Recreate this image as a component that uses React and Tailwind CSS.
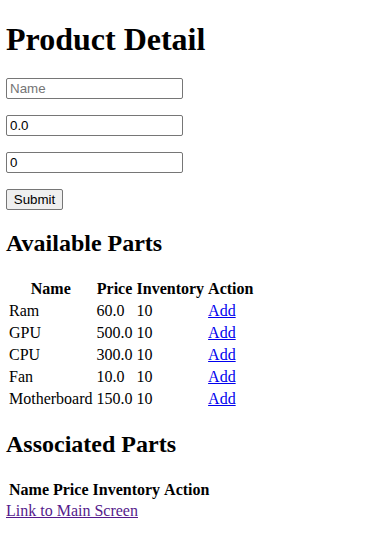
const availableParts = [
  { name: 'Ram', price: '60.0', inventory: 10 },
  { name: 'GPU', price: '500.0', inventory: 10 },
  { name: 'CPU', price: '300.0', inventory: 10 },
  { name: 'Fan', price: '10.0', inventory: 10 },
  { name: 'Motherboard', price: '150.0', inventory: 10 },
];

const cell = 'p-[1px] leading-[18px]';
const th = `${cell} font-bold text-center`;
const td = `${cell} text-left`;

const App = () => {
  return (
    <div className="min-h-[554px] bg-white px-[6px] pt-[1px] font-['Liberation_Serif','Times_New_Roman',serif] text-[16px] text-black">
      {/* Header */}
      <h1 className="mt-[20px] mb-[20px] h-[37px] text-[32px] leading-[37px] font-bold">Product Detail</h1>

      {/* Form */}
      <form className="font-['Liberation_Sans',Arial,sans-serif] text-[13.33px]" onSubmit={(e) => e.preventDefault()}>
        <div className="mb-4 h-[21px]">
          <input
            type="text"
            placeholder="Name"
            className="h-[21px] w-[177px] rounded-[2px] border border-[#767676] bg-white px-[3px] py-[1px] leading-[15px] text-black placeholder:text-[#757575] outline-none"
          />
        </div>
        <div className="mb-4 h-[21px]">
          <input
            type="text"
            defaultValue="0.0"
            className="h-[21px] w-[177px] rounded-[2px] border border-[#767676] bg-white px-[3px] py-[1px] leading-[15px] text-black outline-none"
          />
        </div>
        <div className="mb-4 h-[21px]">
          <input
            type="text"
            defaultValue="0"
            className="h-[21px] w-[177px] rounded-[2px] border border-[#767676] bg-white px-[3px] py-[1px] leading-[15px] text-black outline-none"
          />
        </div>
        <div className="h-[21px]">
          <button
            type="submit"
            className="h-[21px] w-[57px] rounded-[2px] border border-[#767676] bg-[#efefef] px-[6px] leading-[15px] text-black"
          >
            Submit
          </button>
        </div>
      </form>

      {/* Available Parts */}
      <h2 className="mt-[19px] mb-[20px] h-[28px] text-[24px] leading-[28px] font-bold">Available Parts</h2>
      <table className="border-separate border-spacing-[2px] -ml-0">
        <thead>
          <tr>
            <th className={th}>Name</th>
            <th className={th}>Price</th>
            <th className={th}>Inventory</th>
            <th className={th}>Action</th>
          </tr>
        </thead>
        <tbody>
          {availableParts.map((part) => (
            <tr key={part.name}>
              <td className={td}>{part.name}</td>
              <td className={td}>{part.price}</td>
              <td className={td}>{part.inventory}</td>
              <td className={td}>
                <a href="#" className="text-[#0000ee] underline">Add</a>
              </td>
            </tr>
          ))}
        </tbody>
      </table>

      {/* Associated Parts */}
      <h2 className="mt-[19px] mb-[20px] h-[28px] text-[24px] leading-[28px] font-bold">Associated Parts</h2>
      <table className="border-separate border-spacing-[2px]">
        <thead>
          <tr>
            <th className={th}>Name</th>
            <th className={th}>Price</th>
            <th className={th}>Inventory</th>
            <th className={th}>Action</th>
          </tr>
        </thead>
        <tbody></tbody>
      </table>
      <a href="#" className="block w-fit leading-[18px] text-[#551a8b] underline">Link to Main Screen</a>
    </div>
  );
};

export default App;
